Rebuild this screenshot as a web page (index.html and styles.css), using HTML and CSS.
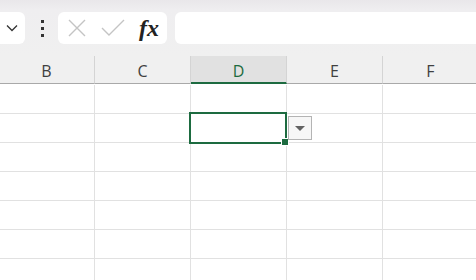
FILE: index.html
```html
<!DOCTYPE html>
<html lang="en">

<head>
  <meta charset="utf-8" />
  <title>Sheet</title>
  <link rel="stylesheet" href="styles.css">
</head>

<body>
  <div class="toolbar">
    <div class="namebox">
      <svg width="12" height="8" viewBox="0 0 12 8"><path d="M1 1.5 L6 6.5 L11 1.5" fill="none" stroke="#333" stroke-width="1.3" /></svg>
    </div>
    <div class="dots"><span></span><span></span><span></span></div>
    <div class="fbuttons">
      <svg class="ico" width="18" height="18" viewBox="0 0 18 18"><path d="M1 1 L17 17 M17 1 L1 17" stroke="#c4c4c4" stroke-width="1.4" fill="none" /></svg>
      <svg class="ico" width="24" height="18" viewBox="0 0 24 18"><path d="M1 9 L8 16 L23 1" stroke="#c4c4c4" stroke-width="1.4" fill="none" /></svg>
      <span class="fx">fx</span>
    </div>
    <div class="formula"></div>
  </div>

  <div class="sheet">
    <div class="colhead">B</div>
    <div class="colhead">C</div>
    <div class="colhead active">D</div>
    <div class="colhead">E</div>
    <div class="colhead">F</div>

    <div class="cell"></div><div class="cell"></div><div class="cell"></div><div class="cell"></div><div class="cell"></div>
    <div class="cell"></div><div class="cell"></div>
    <div class="cell selected">
      <div class="cursor"><span class="handle"></span></div>
      <div class="dropbtn"><span class="tri"></span></div>
    </div>
    <div class="cell"></div><div class="cell"></div>
    <div class="cell"></div><div class="cell"></div><div class="cell"></div><div class="cell"></div><div class="cell"></div>
    <div class="cell"></div><div class="cell"></div><div class="cell"></div><div class="cell"></div><div class="cell"></div>
    <div class="cell"></div><div class="cell"></div><div class="cell"></div><div class="cell"></div><div class="cell"></div>
    <div class="cell"></div><div class="cell"></div><div class="cell"></div><div class="cell"></div><div class="cell"></div>
    <div class="cell"></div><div class="cell"></div><div class="cell"></div><div class="cell"></div><div class="cell"></div>
  </div>
</body>

</html>
```

FILE: styles.css
```css
html,
body {
  margin: 0;
  width: 476px;
  height: 280px;
  overflow: hidden;
  background: #fff;
  font-family: "Open Sans", "Noto Sans", sans-serif;
}

.toolbar {
  display: flex;
  align-items: center;
  height: 56px;
  box-sizing: border-box;
  padding-top: 12px;
  padding-bottom: 12px;
  background: linear-gradient(#e9e7ea 0, #efeef0 10px, #f0f0f0 100%);
}

.namebox {
  width: 25px;
  height: 32px;
  background: #fff;
  border-radius: 0 6px 6px 0;
  display: flex;
  align-items: center;
  justify-content: flex-end;
  padding-right: 7px;
  box-sizing: border-box;
  flex: none;
}

.dots {
  display: flex;
  flex-direction: column;
  gap: 4px;
  margin: 0 14px 0 16px;
}

.dots span {
  width: 3px;
  height: 3px;
  background: #333;
}

.fbuttons {
  width: 109px;
  height: 32px;
  background: #fff;
  border-radius: 6px;
  display: flex;
  align-items: center;
  box-sizing: border-box;
  padding-left: 10px;
  flex: none;
}

.fbuttons .ico:first-child {
  margin-right: 15px;
}

.fx {
  font-family: "Liberation Serif", serif;
  font-style: italic;
  font-weight: bold;
  font-size: 24px;
  color: #222;
  margin-left: 14px;
  letter-spacing: 0;
  line-height: 1;
}

.formula {
  flex: 1;
  height: 32px;
  background: #fff;
  border-radius: 6px 0 0 6px;
  margin-left: 8px;
}

.sheet {
  display: grid;
  grid-template-columns: repeat(5, 96px);
  grid-auto-rows: 29px;
  margin-left: -1px;
}

.colhead {
  height: 28px;
  background: #f0f0f0;
  border-right: 1px solid #d4d4d4;
  border-bottom: 1px solid #a9a9a9;
  box-sizing: border-box;
  display: flex;
  align-items: center;
  justify-content: center;
  font-size: 16px;
  color: #404040;
  padding-top: 2px;
}

.colhead.active {
  background: #e1e1e1;
  color: #1d6b40;
  border-bottom: 2px solid #1d6b40;
  padding-top: 3px;
}

.cell {
  border-right: 1px solid #e1e1e1;
  border-bottom: 1px solid #e1e1e1;
  box-sizing: border-box;
}

.selected {
  position: relative;
}

.cursor {
  position: absolute;
  left: -2px;
  top: -2px;
  width: 98px;
  height: 32px;
  border: 2px solid #1d6b40;
  box-sizing: border-box;
}

.handle {
  position: absolute;
  right: -4px;
  bottom: -4px;
  width: 6px;
  height: 6px;
  background: #1d6b40;
  border: 1px solid #fff;
}

.dropbtn {
  position: absolute;
  left: 97px;
  top: 2px;
  width: 24px;
  height: 24px;
  border: 1px solid #b4b4b4;
  background: #f7f7f7;
  box-sizing: border-box;
  display: flex;
  align-items: center;
  justify-content: center;
}

.tri {
  width: 0;
  height: 0;
  border-left: 5px solid transparent;
  border-right: 5px solid transparent;
  border-top: 5px solid #636363;
}
```
